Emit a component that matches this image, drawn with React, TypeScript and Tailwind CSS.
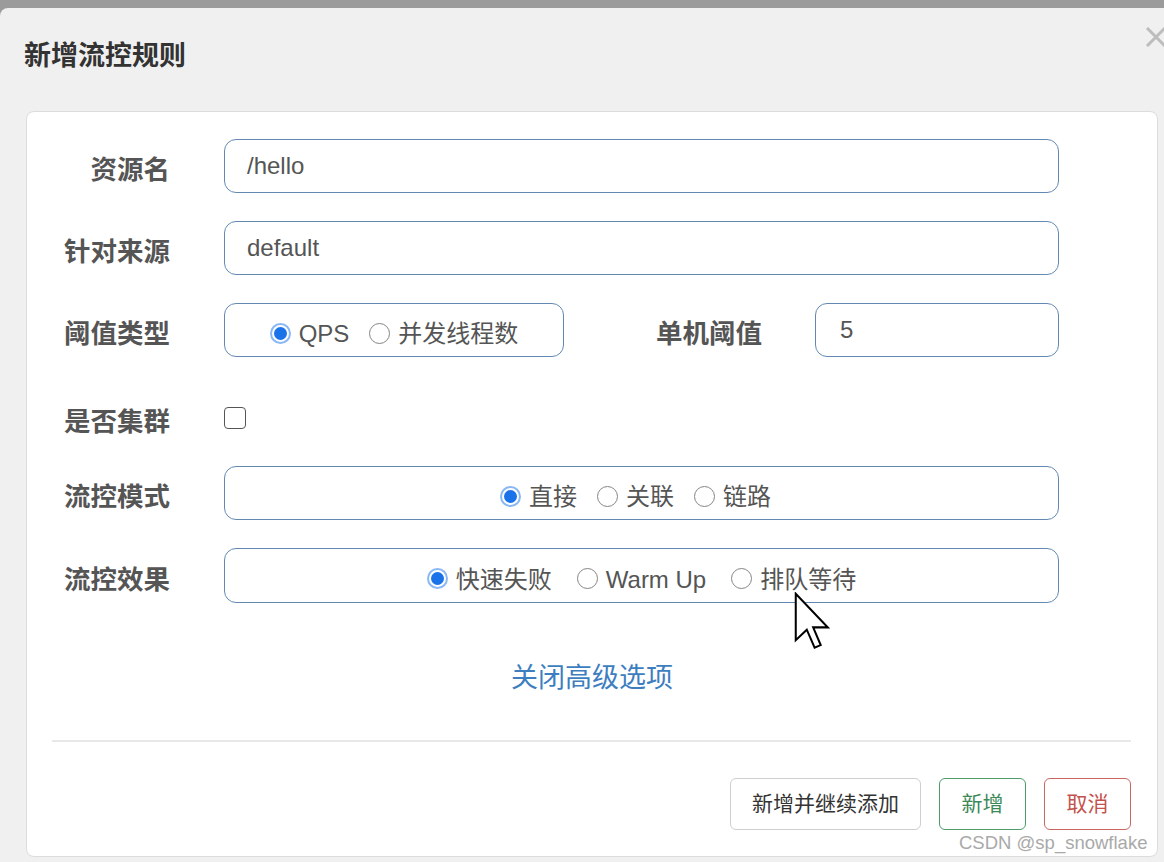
const font = { fontFamily: '"Liberation Sans", "Noto Sans CJK SC", sans-serif' };

function Radio({ label, checked }: { label: string; checked?: boolean }) {
  return (
    <div className="flex items-center gap-[8px] pt-[6px]">
      {checked ? (
        <span className="flex h-[21px] w-[21px] items-center justify-center rounded-full border-[2px] border-[#8ab8f5] bg-white">
          <span className="h-[13px] w-[13px] rounded-full bg-[#1a73e8]" />
        </span>
      ) : (
        <span className="h-[21px] w-[21px] rounded-full border border-[#858585] bg-white" />
      )}
      <span className="pt-[2px] text-[24px] leading-[30px] text-[#555]">{label}</span>
    </div>
  );
}

function Label({ children, width = "w-[143px]" }: { children: string; width?: string }) {
  return (
    <div className={`${width} shrink-0 pt-[8px] text-right text-[26.5px] font-bold leading-[34px] text-[#555]`}>
      {children}
    </div>
  );
}

export default function App() {
  return (
    <div style={font} className="relative h-[862px] w-[1164px] overflow-hidden bg-[#9b9b9b] pt-[8px]">
      <div className="h-full rounded-tl-[8px] bg-[#f0f0f0] pl-[26px] pr-[6px]">
        {/* title */}
        <div className="-ml-[2px] pt-[30px] text-[27px] font-bold leading-[36px] text-[#333]">新增流控规则</div>

        {/* card */}
        <div className="mt-[37px] h-[746px] rounded-[8px] border border-[#dcdcdc] bg-white pt-[27px]">
          <div className="flex h-[54px] items-center">
            <Label>资源名</Label>
            <div className="ml-[54px] flex h-[54px] w-[835px] items-center rounded-[12px] border-[1.5px] border-[#6389b3] pl-[22px] text-[24px] text-[#555]">
              /hello
            </div>
          </div>

          <div className="mt-[28px] flex h-[54px] items-center">
            <Label>针对来源</Label>
            <div className="ml-[54px] flex h-[54px] w-[835px] items-center rounded-[12px] border-[1.5px] border-[#6389b3] pl-[22px] text-[24px] text-[#555]">
              default
            </div>
          </div>

          <div className="mt-[28px] flex h-[54px] items-center">
            <Label>阈值类型</Label>
            <div className="ml-[54px] flex h-[54px] w-[340px] items-center justify-center gap-[20px] rounded-[12px] border-[1.5px] border-[#6389b3]">
              <Radio label="QPS" checked />
              <Radio label="并发线程数" />
            </div>
            <Label width="w-[198px]">单机阈值</Label>
            <div className="ml-[53px] flex h-[54px] w-[244px] items-center rounded-[12px] border-[1.5px] border-[#6389b3] pl-[24px] text-[24px] text-[#555]">
              5
            </div>
          </div>

          <div className="mt-[34px] flex h-[54px] items-center">
            <Label>是否集群</Label>
            <div className="ml-[54px] h-[22px] w-[22px] rounded-[4px] border-[1.5px] border-[#555] bg-white" />
          </div>

          <div className="mt-[21px] flex h-[54px] items-center">
            <Label>流控模式</Label>
            <div className="ml-[54px] flex h-[54px] w-[835px] items-center justify-center gap-[20px] rounded-[12px] border-[1.5px] border-[#6389b3] pr-[12px]">
              <Radio label="直接" checked />
              <Radio label="关联" />
              <Radio label="链路" />
            </div>
          </div>

          <div className="mt-[28px] flex h-[55px] items-center">
            <Label>流控效果</Label>
            <div className="ml-[54px] flex h-[55px] w-[835px] items-center justify-center gap-[25px] rounded-[12px] border-[1.5px] border-[#6389b3]">
              <Radio label="快速失败" checked />
              <Radio label="Warm Up" />
              <Radio label="排队等待" />
            </div>
          </div>

          <div className="mt-[57px] text-center text-[27px] leading-[36px] text-[#3d7ebf]">关闭高级选项</div>

          <div className="ml-[25px] mr-[26px] mt-[44px] h-[2px] bg-[#e8e8e8]" />

          <div className="mr-[26px] mt-[36px] flex justify-end gap-[18px]">
            <button className="h-[52px] w-[191px] rounded-[6px] border border-[#cfcfcf] bg-white text-[21px] text-[#333]">
              新增并继续添加
            </button>
            <button className="h-[52px] w-[87px] rounded-[6px] border-[1.5px] border-[#4e9d6b] bg-white text-[21px] text-[#3b8a57]">
              新增
            </button>
            <button className="h-[52px] w-[87px] rounded-[6px] border-[1.5px] border-[#cc6660] bg-white text-[21px] text-[#c4524c]">
              取消
            </button>
          </div>
        </div>
      </div>

      {/* close */}
      <svg className="absolute left-[1145px] top-[27px]" width="22" height="20" viewBox="0 0 22 20">
        <path d="M2 1 L20 19 M20 1 L2 19" stroke="#bdbdbd" strokeWidth="3" />
      </svg>

      {/* mouse cursor */}
      <svg className="absolute left-[794px] top-[592px]" width="36" height="58" viewBox="-0.6 -0.6 12.4 20">
        <path
          d="M0 0 L0 16 L3.8 12.4 L6.5 18.6 L8.6 17.7 L6 11.6 L11 11.6 Z"
          fill="white"
          stroke="black"
          strokeWidth="0.7"
          strokeLinejoin="miter"
        />
      </svg>

      {/* watermark */}
      <div className="absolute left-[959px] top-[832px] text-[18.5px] leading-[22px] text-[#a9a9a9] [text-shadow:0_0_2px_#fff]">
        CSDN @sp_snowflake
      </div>
    </div>
  );
}
